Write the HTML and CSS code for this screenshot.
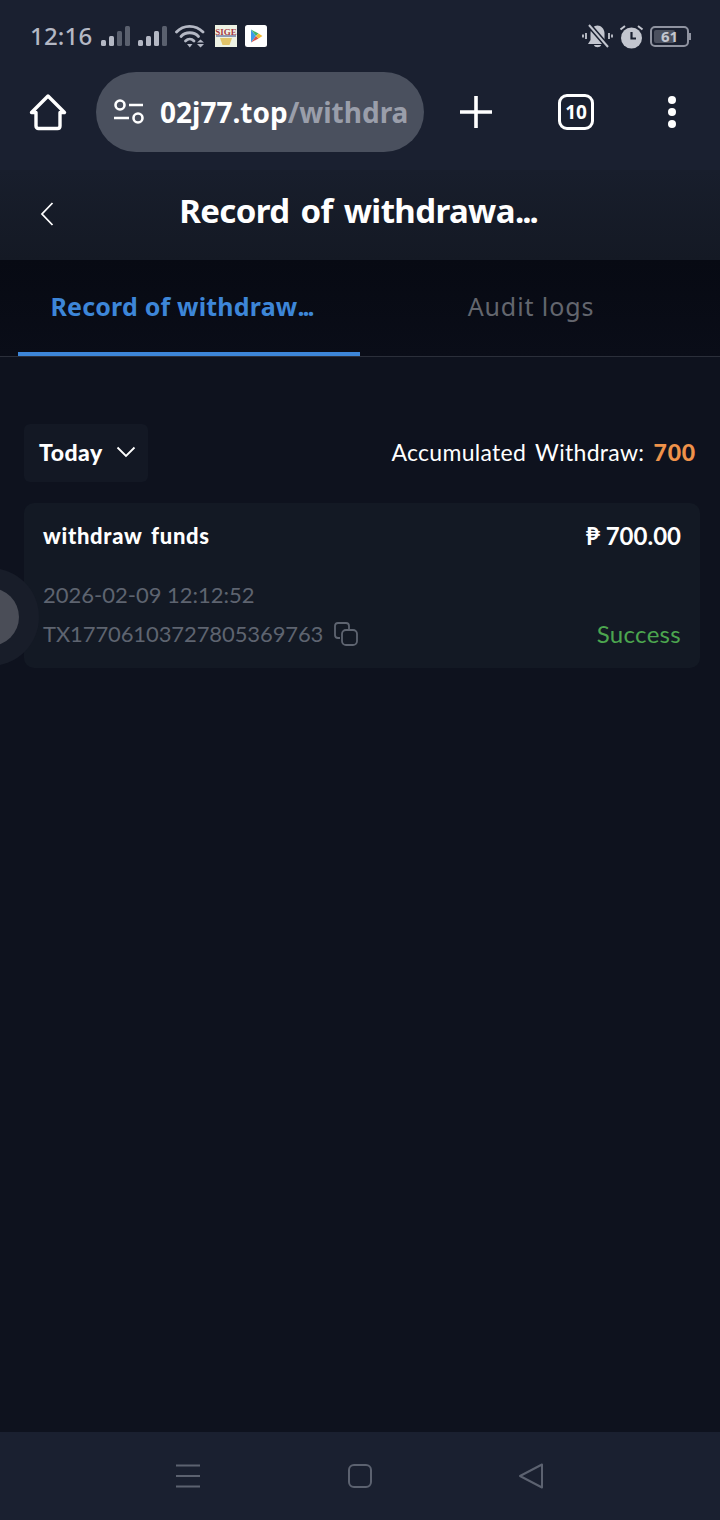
FILE: index.html
```html
<!DOCTYPE html>
<html lang="en">

<head>
    <meta charset="UTF-8">
    <meta name="viewport" content="width=device-width, initial-scale=1.0">
    <title>Record of withdrawal</title>
    <link rel="stylesheet" href="styles.css">
</head>

<body>
    <div class="phone">
        <header class="chrome">
            <div class="status">
                <div class="status_left">
                    <span class="time">12:16</span>
                    <svg class="signal" width="33" height="22" viewBox="0 0 33 22">
                        <rect x="1" y="15" width="5" height="6" rx="1.5" fill="#b4b8c4" />
                        <rect x="9" y="11" width="5" height="10" rx="1.5" fill="#b4b8c4" />
                        <rect x="17" y="6" width="5" height="15" rx="1.5" fill="#5a606e" />
                        <rect x="25" y="1" width="5" height="20" rx="1.5" fill="#5a606e" />
                    </svg>
                    <svg class="signal" width="33" height="22" viewBox="0 0 33 22">
                        <rect x="1" y="15" width="5" height="6" rx="1.5" fill="#b4b8c4" />
                        <rect x="9" y="11" width="5" height="10" rx="1.5" fill="#b4b8c4" />
                        <rect x="17" y="6" width="5" height="15" rx="1.5" fill="#b4b8c4" />
                        <rect x="25" y="1" width="5" height="20" rx="1.5" fill="#5a606e" />
                    </svg>
                    <svg class="wifi" width="30" height="24" viewBox="0 0 30 24">
                        <g fill="none" stroke="#b4b8c4" stroke-width="2.800" stroke-linecap="round">
                            <path d="M1.500 8C8.500 0.500 20.500 0.500 28 8" />
                            <path d="M6 12.500C10.500 7.500 19 7.500 23.500 12.500" />
                            <path d="M10.500 17C13 14.500 16.500 14.500 19 17" />
                        </g>
                        <path d="M12 20H17.500L14.750 23.500Z" fill="#b4b8c4" />
                        <path d="M25.500 15.500L29 18.500H22Z M22 20H29L25.500 23.500Z" fill="#b4b8c4" />
                    </svg>
                    <svg class="app_icon" width="22" height="22" viewBox="0 0 22 22">
                        <rect width="22" height="22" fill="#eef2e4" />
                        <text class="sige" x="11" y="10" text-anchor="middle">SIGE</text>
                        <rect x="1" y="10.500" width="20" height="1" fill="#2f3f80" />
                        <path d="M5 13H17L14.500 20H7.500Z" fill="#e2c468" />
                    </svg>
                    <svg class="app_icon" width="22" height="22" viewBox="0 0 22 22">
                        <rect width="22" height="22" rx="2.500" fill="#fff" />
                        <path d="M6 4.500V17.500L11 11Z" fill="#3e9be8" />
                        <path d="M6 4.500L11 11L13.500 8.500Z" fill="#43b46b" />
                        <path d="M6 17.500L11 11L13.500 13.500Z" fill="#d8554c" />
                        <path d="M13.500 8.500L17.500 11L13.500 13.500L11 11Z" fill="#f3bb34" />
                    </svg>
                </div>
                <div class="status_right">
                    <svg width="31" height="26" viewBox="0 0 31 26">
                        <path d="M8.500 17V10C8.500 6 12 2.500 15.500 2.500C19 2.500 22.500 6 22.500 10V17L25 21H6Z" fill="#c3c6cf" />
                        <path d="M12 22H19C18.500 25 12.500 25 12 22Z" fill="#c3c6cf" />
                        <path d="M7 2L26 24" stroke="#1a2030" stroke-width="5" />
                        <path d="M7 2L26 24" stroke="#c3c6cf" stroke-width="2" />
                        <path d="M4 10V16M1 11.500V14.500M27 10V16M30 11.500V14.500" stroke="#c3c6cf" stroke-width="1.800" fill="none" />
                    </svg>
                    <svg width="25" height="25" viewBox="0 0 25 25">
                        <circle cx="12.500" cy="14" r="10.500" fill="#c3c6cf" />
                        <path d="M12.500 8V14.500H17" stroke="#1a2030" stroke-width="2.200" fill="none" />
                        <path d="M1.500 5.500L6 2M23.500 5.500L19 2" stroke="#c3c6cf" stroke-width="2" fill="none" />
                    </svg>
                    <div class="battery"><span class="battery_fill"></span><span class="battery_num">61</span></div>
                </div>
            </div>
            <div class="toolbar">
                <svg class="home" width="38" height="38" viewBox="0 0 38 38">
                    <path d="M2.500 19.500L19 3L35.500 19.500H31V33C31 34.500 30 35.500 28.500 35.500H9.500C8 35.500 7 34.500 7 33V19.500Z" fill="none" stroke="#fff" stroke-width="3.400" stroke-linejoin="round" />
                </svg>
                <div class="url">
                    <svg width="32" height="26" viewBox="0 0 32 26">
                        <circle cx="7" cy="6" r="4.500" fill="none" stroke="#fff" stroke-width="2.600" />
                        <path d="M16 6H30M1 19H16" stroke="#fff" stroke-width="2.600" fill="none" />
                        <circle cx="25" cy="19" r="4.500" fill="none" stroke="#fff" stroke-width="2.600" />
                    </svg>
                    <p class="url_text">02j77.top<span>/withdra</span></p>
                </div>
                <svg class="plus" width="32" height="32" viewBox="0 0 32 32">
                    <path d="M16 0V32M0 16H32" stroke="#fff" stroke-width="3.600" stroke-linecap="round" />
                </svg>
                <div class="tabs_count">10</div>
                <div class="dots"><i></i><i></i><i></i></div>
            </div>
        </header>

        <section class="title_bar">
            <svg class="back" width="14" height="24" viewBox="0 0 14 24">
                <path d="M12.500 1L2 12L12.500 23" fill="none" stroke="#fff" stroke-width="1.800" />
            </svg>
            <h1>Record of withdrawa<span class="cut">...</span></h1>
        </section>

        <nav class="tabs">
            <div class="tab on"><span>Record of withdraw<span class="cut">...</span></span></div>
            <div class="tab">Audit logs</div>
        </nav>

        <main class="content">
            <div class="filter_row">
                <div class="filter">
                    <span>Today</span>
                    <svg width="20" height="12" viewBox="0 0 20 12">
                        <path d="M1.500 1.500L10 10L18.500 1.500" fill="none" stroke="#fff" stroke-width="1.800" />
                    </svg>
                </div>
                <p class="total">Accumulated Withdraw: <b>700</b></p>
            </div>

            <div class="card">
                <div class="card_top">
                    <span class="card_name">withdraw funds</span>
                    <span class="card_money">₱ 700.00</span>
                </div>
                <p class="card_date">2026-02-09 12:12:52</p>
                <div class="card_bottom">
                    <div class="card_tx">
                        <span>TX17706103727805369763</span>
                        <svg width="26" height="26" viewBox="0 0 26 26">
                            <path d="M7 17H5C3 17 2 16 2 14V5C2 3 3 2 5 2H13C15 2 16 3 16 5V8" fill="none" stroke="#5e6470" stroke-width="1.800" />
                            <rect x="9" y="9" width="15" height="15" rx="4" fill="none" stroke="#5e6470" stroke-width="1.800" />
                        </svg>
                    </div>
                    <span class="card_state">Success</span>
                </div>
            </div>
        </main>

        <footer class="sys_nav">
            <svg width="26" height="24" viewBox="0 0 26 24">
                <path d="M0 1.500H24M0 12H24M0 22.500H24" stroke="#5c6270" stroke-width="2" />
            </svg>
            <svg width="26" height="26" viewBox="0 0 26 26">
                <rect x="2" y="2" width="22" height="22" rx="5" fill="none" stroke="#5c6270" stroke-width="2" />
            </svg>
            <svg width="26" height="28" viewBox="0 0 26 28">
                <path d="M24 2.500V25.500L2 14Z" fill="none" stroke="#5c6270" stroke-width="2" stroke-linejoin="round" />
            </svg>
        </footer>

        <div class="float_ball"><span></span></div>
    </div>
</body>

</html>
```

FILE: styles.css
```css
@charset "utf-8";

* {
    margin: 0;
    padding: 0;
    box-sizing: border-box;
}

body {
    line-height: 1;
    color: #fff;
    background-color: #0e121e;
    font-family: "Noto Sans", sans-serif;
}

svg {
    display: block;
    flex: none;
}

.phone {
    width: 720px;
    height: 1520px;
    position: relative;
    overflow: hidden;
    display: flex;
    flex-direction: column;
}

/* browser top */
.chrome {
    height: 170px;
    background-color: #1a2030;
}

.status {
    height: 72px;
    padding: 0 31px 0 30px;
    display: flex;
    justify-content: space-between;
    align-items: center;
}

.status_left {
    display: flex;
    align-items: center;
}

.time {
    font-size: 24px;
    font-weight: 500;
    color: #b4b8c4;
    letter-spacing: 0.2px;
    margin-right: 8px;
}

.signal {
    margin-right: 4px;
}

.wifi {
    margin: 0 10px 0 1px;
}

.app_icon {
    margin-right: 8px;
}

.sige {
    font-family: "Liberation Serif", serif;
    font-size: 9px;
    font-weight: 700;
    fill: #a83a44;
}

.status_right {
    display: flex;
    align-items: center;
    gap: 6px;
}

.battery {
    width: 39px;
    height: 21px;
    border: 2px solid #8f93a0;
    border-radius: 5px;
    position: relative;
    display: flex;
    align-items: center;
    justify-content: center;
}

.battery:after {
    content: "";
    position: absolute;
    right: -4px;
    top: 5px;
    width: 2px;
    height: 7px;
    background-color: #8f93a0;
}

.battery_fill {
    position: absolute;
    left: 2px;
    top: 2px;
    bottom: 2px;
    width: 21px;
    border-radius: 2px;
    background-color: #4b505e;
}

.battery_num {
    position: relative;
    font-size: 15px;
    font-weight: 700;
    color: #c3c6cf;
}

.toolbar {
    height: 80px;
    padding-left: 29px;
    display: flex;
    align-items: center;
}

.url {
    width: 328px;
    height: 80px;
    margin-left: 29px;
    padding-left: 17px;
    border-radius: 40px;
    background-color: #4a505e;
    display: flex;
    align-items: center;
    gap: 15px;
    overflow: hidden;
}

.url_text {
    font-size: 28px;
    font-weight: 700;
    white-space: nowrap;
}

.url_text span {
    color: #9a9eaa;
}

.plus {
    margin-left: 36px;
}

.tabs_count {
    width: 36px;
    height: 36px;
    margin-left: 66px;
    border: 3.5px solid #fff;
    border-radius: 9px;
    font-size: 19px;
    font-weight: 700;
    display: flex;
    align-items: center;
    justify-content: center;
}

.dots {
    margin-left: 74px;
    display: flex;
    flex-direction: column;
    gap: 4px;
}

.dots i {
    display: block;
    width: 8px;
    height: 8px;
    border-radius: 50%;
    background-color: #fff;
}

/* page title */
.title_bar {
    height: 90px;
    padding-right: 4px;
    position: relative;
    display: flex;
    align-items: center;
    justify-content: center;
    background: linear-gradient(#181e2c, #141924);
}

.title_bar .back {
    position: absolute;
    left: 40px;
    top: 32px;
}

.title_bar h1 {
    font-size: 33px;
    font-weight: 700;
    letter-spacing: -0.6px;
    word-spacing: 3px;
    margin-top: -10px;
}

.cut {
    letter-spacing: -2px;
}

/* tab */
.tabs {
    height: 97px;
    padding-left: 18px;
    display: flex;
    background: linear-gradient(#070a13, #0a0d18);
    border-bottom: 1px solid #2b2f3a;
}

.tab {
    width: 342px;
    height: 96px;
    padding-bottom: 4px;
    display: flex;
    align-items: center;
    justify-content: center;
    font-size: 25px;
    letter-spacing: 0.9px;
    color: #63666e;
}

.tab.on {
    padding: 0 15px 0 0;
    font-weight: 700;
    letter-spacing: 0.2px;
    color: #3d86d8;
    border-bottom: 4px solid #3d86d8;
}

/* list */
.content {
    flex: 1;
    padding: 67px 24px 0 24px;
    background-color: #0e121e;
}

.filter_row {
    display: flex;
    justify-content: space-between;
    align-items: center;
}

.filter {
    width: 124px;
    height: 58px;
    padding: 0 0 2px 15px;
    border-radius: 6px;
    background-color: #131824;
    display: flex;
    align-items: center;
    gap: 13px;
    font-family: Lato, sans-serif;
    font-size: 23px;
    font-weight: 900;
    letter-spacing: 0.5px;
}

.total {
    font-family: Lato, sans-serif;
    font-size: 23px;
    letter-spacing: 0.3px;
    word-spacing: 3px;
    padding-bottom: 2px;
}

.total b {
    font-weight: 900;
    letter-spacing: 0.8px;
    color: #f0924a;
}

.card {
    width: 676px;
    height: 165px;
    margin-top: 21px;
    padding: 21px 19px 0;
    border-radius: 10px;
    background-color: #131924;
    font-family: Lato, sans-serif;
}

.card_top,
.card_bottom {
    display: flex;
    justify-content: space-between;
    align-items: center;
}

.card_name,
.card_money {
    font-size: 22px;
    font-weight: 900;
}

.card_name {
    letter-spacing: 0.7px;
    word-spacing: 3px;
}

.card_money {
    font-size: 24px;
    font-weight: 700;
    word-spacing: 0;
}

.card_date {
    margin-top: 36px;
    font-size: 22px;
    color: #5e6470;
}

.card_bottom {
    margin-top: 15px;
}

.card_tx {
    display: flex;
    align-items: center;
    gap: 10px;
    font-size: 22px;
    letter-spacing: -0.1px;
    color: #5e6470;
}

.card_state {
    font-size: 24px;
    letter-spacing: 0.3px;
    color: #4ca64f;
}

/* android nav */
.sys_nav {
    height: 88px;
    padding: 0 176px;
    display: flex;
    justify-content: space-between;
    align-items: center;
    background-color: #1a2030;
}

.float_ball {
    position: absolute;
    left: -59px;
    top: 568px;
    width: 98px;
    height: 98px;
    border-radius: 50%;
    background-color: #181d29;
    display: flex;
    align-items: center;
    justify-content: center;
}

.float_ball span {
    width: 58px;
    height: 58px;
    border-radius: 50%;
    background-color: #4a4d57;
}
```
